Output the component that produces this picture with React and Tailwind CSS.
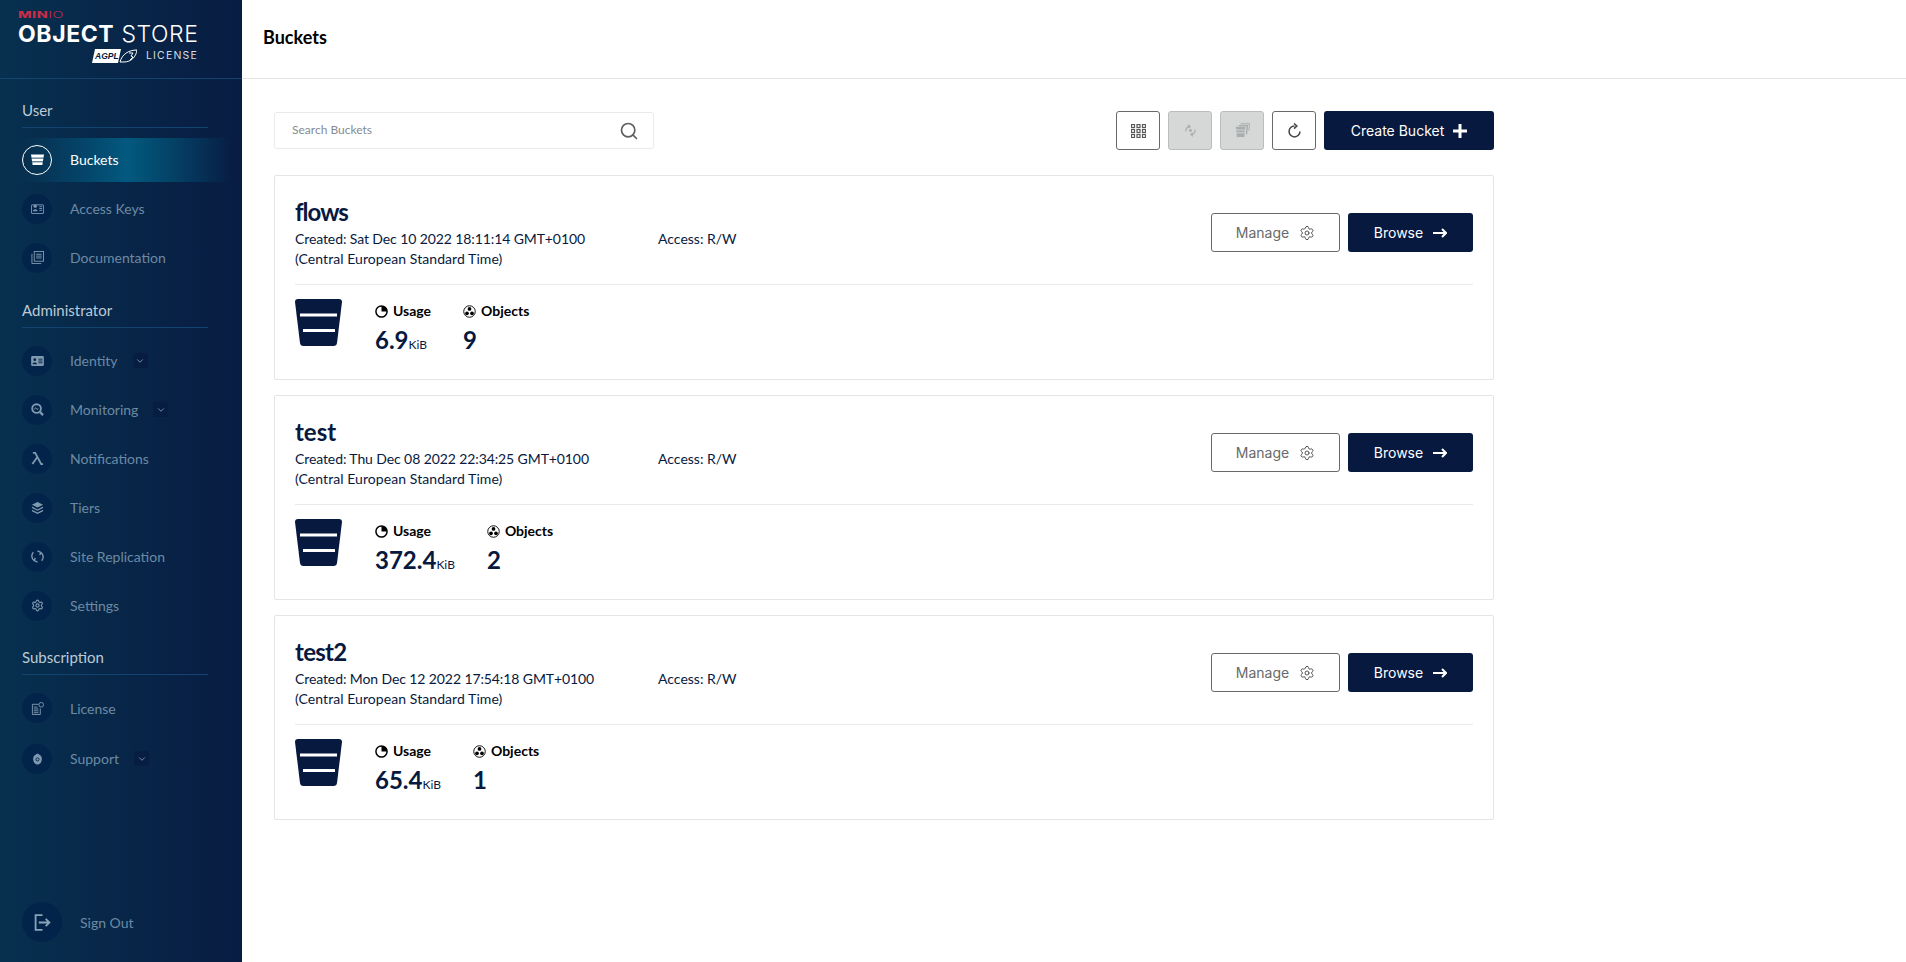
import React from 'react';
import { Search, Settings, ChevronDown } from 'lucide-react';

const lato = '[font-family:Lato,sans-serif]';

const BucketIcon = ({ className = '' }) => (
    <svg viewBox="0 0 47 47" className={className}>
        <path d="M3 0h41q3 0 3 3l-5 41q-.4 3-3.400 3H8.400Q5.400 47 5 44L0 3q0-3 3-3z" fill="#07193E" />
        <rect x="5" y="14.500" width="37" height="3" fill="#fff" />
        <rect x="8" y="30" width="32" height="3" fill="#fff" />
    </svg>
);

const MiniBucket = () => (
    <svg viewBox="0 0 14 14" className="w-[13px] h-[13px]">
        <path d="M0 1.500h14l-1.800 11.500H1.800z" fill="#fff" />
        <rect x="0" y="5" width="14" height="1" fill="#06405f" />
        <rect x="0" y="9" width="14" height="1" fill="#06405f" />
    </svg>
);

const KeysIcon = () => (
    <svg viewBox="0 0 14 12" className="w-[13px] h-[11px]" fill="none" stroke="currentColor" strokeWidth="1">
        <rect x="0.500" y="2" width="13" height="9.500" rx="0.500" />
        <circle cx="4.500" cy="3.500" r="1.800" fill="currentColor" stroke="none" />
        <path d="M2 9c0-3 5-3 5 0z" fill="currentColor" stroke="none" />
        <path d="M9 4h3M9 6h3M9 8h3" />
    </svg>
);

const DocsIcon = () => (
    <svg viewBox="0 0 14 14" className="w-[13px] h-[13px]" fill="none" stroke="currentColor" strokeWidth="1">
        <rect x="3.500" y="0.500" width="10" height="10.500" />
        <path d="M1 3v10.500h10M5.500 3.500h6M5.500 5.500h6M5.500 7.500h6" />
    </svg>
);

const IdentityIcon = () => (
    <svg viewBox="0 0 14 11" className="w-[13px] h-[10px]">
        <rect width="14" height="11" rx="1.500" fill="currentColor" />
        <circle cx="4" cy="4" r="1.500" fill="#03244a" />
        <path d="M1.500 9c0-2.500 5-2.500 5 0z" fill="#03244a" />
        <path d="M8 3.500h4.500M8 5.500h4.500M8 7.500h4.500" stroke="#03244a" strokeWidth="1" />
    </svg>
);

const MonitoringIcon = () => (
    <svg viewBox="0 0 14 14" className="w-[13px] h-[13px]" fill="none" stroke="currentColor">
        <circle cx="6" cy="6" r="4.700" strokeWidth="2" />
        <path d="M3.500 7l1.500-2 1.500 2 1.500-1" strokeWidth="1" />
        <path d="M9.500 9.500l3.500 3.500" strokeWidth="2.500" />
    </svg>
);

const LambdaIcon = () => (
    <svg viewBox="0 0 14 14" className="w-[13px] h-[13px]" fill="none" stroke="currentColor" strokeWidth="2">
        <path d="M2 1h2.500L11 13h2M6.500 6L1.500 13" />
    </svg>
);

const TiersIcon = () => (
    <svg viewBox="0 0 14 13" className="w-[13px] h-[12px]" fill="currentColor">
        <path d="M7 0l6 3-6 3-6-3z" />
        <path d="M1 5l6 3 6-3v1.500l-6 3-6-3z" />
        <path d="M1 8.500l6 3 6-3V10l-6 3-6-3z" />
    </svg>
);

const ReplicationIcon = () => (
    <svg viewBox="0 0 14 14" className="w-[13px] h-[13px]" fill="none" stroke="currentColor" strokeWidth="1.500">
        <path d="M2.500 2.500A6 6 0 0 0 3.500 11.500M11.500 11.500A6 6 0 0 0 10.500 2.500" />
        <path d="M10.500 2.500L7 1M10.500 2.500L9.500 5.500M3.500 11.500L7 13M3.500 11.500L4.500 8.500" />
    </svg>
);

const LicenseIcon = () => (
    <svg viewBox="0 0 14 14" className="w-[13px] h-[13px]" fill="none" stroke="currentColor" strokeWidth="1">
        <path d="M8 2.500H1.500v11h8.500V7" />
        <path d="M3 5.500h4M3 7.500h5M3 9.500h5M3 11.500h5" />
        <circle cx="11" cy="3" r="2.500" />
    </svg>
);

const SupportIcon = () => (
    <svg viewBox="0 0 14 14" className="w-[11px] h-[14px]">
        <path d="M7 0c1 1 4 1.500 5 4 1 3 .5 6-1 8-1 1-2.500 2-4 2s-3-1-4-2C1.500 10 1 7 2 4c1-2.500 4-3 5-4z" fill="currentColor" />
        <circle cx="7" cy="7.500" r="2" fill="none" stroke="#03244a" strokeWidth="1.200" />
    </svg>
);

const GridIcon = () => (
    <svg viewBox="0 0 15 14" className="w-[15px] h-[14px]" fill="none" stroke="#5a5a5a" strokeWidth="1.200">
        <rect x="0.500" y="0.500" width="3" height="3" />
        <rect x="6" y="0.500" width="3" height="3" />
        <rect x="11.500" y="0.500" width="3" height="3" />
        <rect x="0.500" y="5.500" width="3" height="3" />
        <rect x="6" y="5.500" width="3" height="3" />
        <rect x="11.500" y="5.500" width="3" height="3" />
        <rect x="0.500" y="10.500" width="3" height="3" />
        <rect x="6" y="10.500" width="3" height="3" />
        <rect x="11.500" y="10.500" width="3" height="3" />
    </svg>
);

const ReplicateIcon = () => (
    <svg viewBox="0 0 16 16" className="w-[13px] h-[13px]" fill="none" stroke="#a9adad" strokeWidth="1.500">
        <circle cx="8" cy="8" r="1.800" fill="#a9adad" stroke="none" />
        <path d="M2.500 9a5.500 5.500 0 0 1 4-6M13.500 7a5.500 5.500 0 0 1-4 6" />
        <path d="M5 1l2.500 2L5.500 5M11 15l-2.500-2 2-2" />
    </svg>
);

const LifecycleIcon = () => (
    <svg viewBox="0 0 16 16" className="w-[15px] h-[15px]" fill="#a9adad">
        <path d="M1 4h10l-1 11H2z" />
        <path d="M4 2h10l-1 10h-1.500l.8-8.500H4zM6 .2h10l-.8 8h-1l.7-7H6z" />
        <rect x="1" y="7" width="10" height="1" fill="#d6d8d8" />
        <rect x="1" y="10" width="10" height="1" fill="#d6d8d8" />
    </svg>
);

const RefreshIcon = () => (
    <svg viewBox="0 0 16 16" className="w-[15px] h-[15px]" fill="none" stroke="#444" strokeWidth="1.600">
        <path d="M8 3.200A5.800 5.800 0 1 0 13.800 9" />
        <path d="M7.500 0.500L10.500 3.200 7.500 6" />
    </svg>
);

const PlusIcon = () => (
    <svg viewBox="0 0 14 14" className="w-[14px] h-[14px]" fill="none" stroke="#fff" strokeWidth="3">
        <path d="M7 0v14M0 7h14" />
    </svg>
);

const ArrowIcon = () => (
    <svg viewBox="0 0 14 10" className="w-[14px] h-[10px]" fill="none" stroke="#fff" strokeWidth="2">
        <path d="M0 5h12.500M9 1l4 4-4 4" />
    </svg>
);

const UsageIcon = () => (
    <svg viewBox="0 0 14 14" className="w-[13px] h-[13px]">
        <circle cx="7" cy="7" r="6" fill="none" stroke="#000" strokeWidth="1.600" />
        <path d="M7 7V1a6 6 0 0 1 6 6z" fill="#000" />
    </svg>
);

const ObjectsIcon = () => (
    <svg viewBox="0 0 14 14" className="w-[13px] h-[13px]">
        <circle cx="7" cy="7" r="6.200" fill="none" stroke="#000" strokeWidth="1" />
        <circle cx="7" cy="4.200" r="2" fill="#000" />
        <circle cx="4.300" cy="9" r="2" fill="#000" />
        <circle cx="9.700" cy="9" r="2" fill="#000" />
    </svg>
);

const AgplLogo = () => (
    <svg viewBox="0 0 45 14" className="w-[45px] h-[14px]">
        <path d="M3 0h26l-3 14H0z" fill="#fff" />
        <text x="3" y="9.500" fontSize="8.500" fontWeight="700" fontStyle="italic" fontFamily="Liberation Sans, sans-serif" fill="#07193E">AGPL</text>
        <path d="M28 13C30 5 37 1 45 1c-1 7-6 12-13 12z" fill="none" stroke="#fff" strokeWidth="1" />
        <path d="M37 4h4l-2 3 2 1-3 3" fill="none" stroke="#fff" strokeWidth="1" />
    </svg>
);

const SectionLabel = ({ children, className = '' }) => (
    <div className={`ml-[22px] mr-[34px] border-b border-[#12446f] text-[15px] leading-5 text-[#bccad6] pb-[7px] ${className}`}>
        {children}
    </div>
);

const NavItem = ({ icon, label, chevron, active, className = 'h-[49px]' }) => (
    <div className={`relative flex items-center pl-[22px] ${className}`}>
        {active && (
            <div className="absolute left-[22px] right-[10px] top-[2.500px] h-[44px] bg-gradient-to-r from-transparent via-[#02597f] to-transparent" />
        )}
        <div className={`relative w-[30px] h-[30px] rounded-full flex items-center justify-center ${active ? 'border border-white text-white' : 'bg-[#03244a] text-[#7f99b0]'}`}>
            {icon}
        </div>
        <span className={`relative ml-[18px] text-[14px] ${active ? 'text-white' : 'text-[#6d8aa3]'}`}>{label}</span>
        {chevron && (
            <span className="relative ml-[15px] w-[15px] h-[15px] rounded-[2px] bg-[#081d42] flex items-center justify-center text-[#8ba3b8]">
                <ChevronDown size={10} />
            </span>
        )}
    </div>
);

const Sidebar = () => (
    <aside className={`w-[242px] shrink-0 h-[962px] flex flex-col bg-gradient-to-r from-[#07304f] to-[#081c42] ${lato}`}>
        <div className="h-[79px] shrink-0 border-b border-[#12446f] pl-[18px] pt-[11px] [font-family:Inter,sans-serif]">
            <div className="text-[9px] leading-[8px] tracking-[0.3px] text-[#c72c48] scale-x-[1.6] origin-left">
                <span className="font-extrabold">MIN</span><span className="font-light">IO</span>
            </div>
            <div className="text-[23px] leading-[24px] text-white font-light whitespace-nowrap tracking-[0.6px] mt-[3px]">
                <span className="font-bold">OBJECT</span> STORE
            </div>
            <div className="flex items-center justify-end w-[180px] mt-[3px]">
                <AgplLogo />
                <span className="ml-[9px] text-[10.500px] leading-[14px] tracking-[1.2px] text-[#d5dde4]">LICENSE</span>
            </div>
        </div>

        <SectionLabel className="mt-[21px]">User</SectionLabel>
        <div className="mt-[7px]">
            <NavItem active icon={<MiniBucket />} label="Buckets" />
            <NavItem icon={<KeysIcon />} label="Access Keys" />
            <NavItem icon={<DocsIcon />} label="Documentation" />
        </div>

        <SectionLabel className="mt-[18px]">Administrator</SectionLabel>
        <div className="mt-[8px]">
            <NavItem icon={<IdentityIcon />} label="Identity" chevron />
            <NavItem icon={<MonitoringIcon />} label="Monitoring" chevron />
            <NavItem icon={<LambdaIcon />} label="Notifications" />
            <NavItem icon={<TiersIcon />} label="Tiers" />
            <NavItem icon={<ReplicationIcon />} label="Site Replication" />
            <NavItem icon={<Settings size={13} />} label="Settings" />
        </div>

        <SectionLabel className="mt-[17px]">Subscription</SectionLabel>
        <div className="mt-[8px]">
            <NavItem icon={<LicenseIcon />} label="License" className="h-[50px]" />
            <NavItem icon={<SupportIcon />} label="Support" chevron className="h-[51px]" />
        </div>

        <div className="mt-auto mb-[20px] pl-[22px] flex items-center">
            <div className="w-[40px] h-[40px] rounded-full bg-[#03244a] flex items-center justify-center text-[#8ba3b8]">
                <svg viewBox="0 0 16 16" className="w-[17px] h-[17px]" fill="none" stroke="currentColor" strokeWidth="1.700">
                    <path d="M8 1H1.500v14H8M4.500 8h10M11 4.500L14.500 8 11 11.500" />
                </svg>
            </div>
            <span className="ml-[18px] text-[14px] text-[#6d8aa3]">Sign Out</span>
        </div>
    </aside>
);

const IconButton = ({ children, disabled }) => (
    <div className={`w-[44px] h-[39px] rounded-[3px] border flex items-center justify-center ${disabled ? 'bg-[#d6d8d8] border-[#bbbdbd]' : 'bg-white border-[#696969]'}`}>
        {children}
    </div>
);

const BucketCard = ({ name, nameClass = '', created, usage, objects }) => (
    <div className="h-[205px] border border-[#e5e5e5] rounded-[2px] bg-white px-[20px] pt-[21px]">
        <div className="h-[88px] flex border-b border-[#eaeaea]">
            <div className="w-[363px]">
                <div className={`text-[24px] leading-[29px] font-bold text-[#07193E] ${nameClass}`}>{name}</div>
                <div className="text-[14px] leading-[20px] text-[#07193E] mt-[3px]">
                    <span className="tracking-[-0.1px]">Created: {created}</span>
                    <br />
                    <span className="tracking-[0.07px]">(Central European Standard Time)</span>
                </div>
            </div>
            <div className="text-[14px] leading-[20px] text-[#07193E] mt-[32px]">Access: R/W</div>
            <div className="ml-auto flex gap-[8px] mt-[16px] [font-family:Inter,sans-serif] text-[14px]">
                <div className="w-[129px] h-[39px] rounded-[3px] border border-[#696969] flex items-center justify-center gap-[10px] text-[#696969]">
                    Manage <Settings size={16} strokeWidth={1.500} className="text-[#555]" />
                </div>
                <div className="w-[125px] h-[39px] rounded-[3px] bg-[#07193E] flex items-center justify-center gap-[10px] text-white">
                    Browse <ArrowIcon />
                </div>
            </div>
        </div>
        <div className="flex mt-[14px]">
            <BucketIcon className="w-[47px] h-[47px]" />
            <div className="ml-[33px] mt-[2px]">
                <div className="flex items-center gap-[5px] text-[14px] leading-[20px] font-bold text-black">
                    <UsageIcon /> Usage
                </div>
                <div className="flex items-baseline text-[#07193E] mt-[2px]">
                    <span className="text-[24px] leading-[34px] font-bold">{usage}</span>
                    <span className="text-[12px]">KiB</span>
                </div>
            </div>
            <div className="ml-[32px] mt-[2px]">
                <div className="flex items-center gap-[5px] text-[14px] leading-[20px] font-bold text-black">
                    <ObjectsIcon /> Objects
                </div>
                <div className="text-[24px] leading-[34px] font-bold text-[#07193E] mt-[2px]">{objects}</div>
            </div>
        </div>
    </div>
);

const App = () => {
    return (
        <div className={`flex w-[1906px] h-[962px] overflow-hidden bg-white ${lato}`}>
            <Sidebar />
            <main className="flex-1">
                <header className="h-[79px] border-b border-[#e5e5e5] pl-[21px] flex items-center">
                    <h1 className="text-[18px] font-bold text-black -mt-[4px]">Buckets</h1>
                </header>
                <div className="w-[1252px] pl-[32px]">
                    <div className="flex items-center justify-between mt-[32px]">
                        <div className="w-[380px] h-[37px] border border-[#eaeaea] rounded-[3px] flex items-center justify-between pl-[17px] pr-[14px]">
                            <span className="text-[12px] text-[#858b92] -mt-[1px]">Search Buckets</span>
                            <Search size={20} className="text-[#5f5f5f]" />
                        </div>
                        <div className="flex gap-[8px]">
                            <IconButton><GridIcon /></IconButton>
                            <IconButton disabled><ReplicateIcon /></IconButton>
                            <IconButton disabled><LifecycleIcon /></IconButton>
                            <IconButton><RefreshIcon /></IconButton>
                            <div className="w-[170px] h-[39px] rounded-[3px] bg-[#07193E] flex items-center justify-center gap-[9px] text-white text-[14px] [font-family:Inter,sans-serif]">
                                Create Bucket <PlusIcon />
                            </div>
                        </div>
                    </div>
                    <div className="flex flex-col gap-[15px] mt-[25px]">
                        <BucketCard name="flows" nameClass="tracking-[-1px]" created="Sat Dec 10 2022 18:11:14 GMT+0100" usage="6.9" objects="9" />
                        <BucketCard name="test" created="Thu Dec 08 2022 22:34:25 GMT+0100" usage="372.4" objects="2" />
                        <BucketCard name="test2" nameClass="tracking-[-0.7px]" created="Mon Dec 12 2022 17:54:18 GMT+0100" usage="65.4" objects="1" />
                    </div>
                </div>
            </main>
        </div>
    );
};

export default App;
